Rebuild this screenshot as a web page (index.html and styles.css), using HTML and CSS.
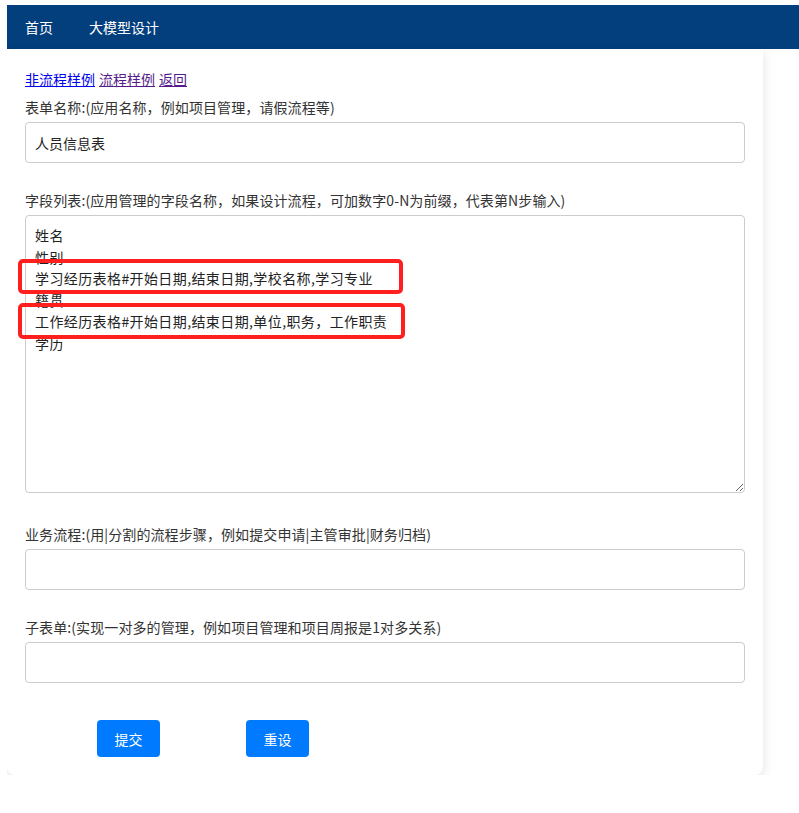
FILE: index.html
```html
<!DOCTYPE html>
<html lang="zh-CN">
<head>
<meta charset="utf-8">
<title>大模型设计</title>
<link rel="stylesheet" href="styles.css">
</head>
<body>
<nav class="navbar">
  <a class="nav-item" href="#">首页</a>
  <a class="nav-item" href="#">大模型设计</a>
</nav>
<main class="card">
  <div class="links">
    <a class="link" href="#">非流程样例</a>
    <a class="link visited" href="#">流程样例</a>
    <a class="link visited" href="#">返回</a>
  </div>
  <div class="group">
    <label class="label">表单名称:(应用名称，例如项目管理，请假流程等)</label>
    <input class="control" type="text" value="人员信息表">
  </div>
  <div class="group group-fields">
    <label class="label">字段列表:(应用管理的字段名称，如果设计流程，可加数字0-N为前缀，代表第N步输入)</label>
    <div class="area-wrap">
      <textarea class="control area">姓名
性别
学习经历表格#开始日期,结束日期,学校名称,学习专业
籍贯
工作经历表格#开始日期,结束日期,单位,职务，工作职责
学历</textarea>
      <div class="mark mark-1"></div>
      <div class="mark mark-2"></div>
    </div>
  </div>
  <div class="group group-flow">
    <label class="label">业务流程:(用|分割的流程步骤，例如提交申请|主管审批|财务归档)</label>
    <input class="control" type="text">
  </div>
  <div class="group group-sub">
    <label class="label">子表单:(实现一对多的管理，例如项目管理和项目周报是1对多关系)</label>
    <input class="control" type="text">
  </div>
  <div class="actions">
    <button class="btn" type="button">提交</button>
    <button class="btn" type="button">重设</button>
  </div>
</main>
</body>
</html>
```

FILE: styles.css
```css
html, body {
  background: #ffffff;
}
body {
  margin: 5px 0 0 7px;
  font-family: "Noto Sans CJK SC", "Noto Sans", sans-serif;
  font-size: 14px;
  line-height: 21px;
  color: #333333;
}
.navbar {
  display: flex;
  align-items: center;
  height: 44px;
  background: #033f7c;
}
.nav-item {
  padding: 0 18px;
  color: #ffffff;
  text-decoration: none;
  font-size: 14px;
}
.card {
  width: 756px;
  box-sizing: border-box;
  padding: 20px 18px 18px;
  background: #ffffff;
  border-radius: 0 0 8px 8px;
  box-shadow: 0 3px 12px rgba(0, 0, 0, 0.12);
}
.links {
  display: flex;
  gap: 4px;
  margin-bottom: 7px;
}
.link {
  color: #0000ee;
  text-decoration: underline;
}
.link.visited {
  color: #551a8b;
}
.group {
  display: flex;
  flex-direction: column;
}
.label {
  display: block;
  margin-bottom: 4px;
  color: #333333;
  letter-spacing: 0.1px;
}
.group-fields { margin-top: 27px; }
.group-flow { margin-top: 31px; }
.group-sub { margin-top: 27px; }
.control {
  display: block;
  width: 100%;
  height: 41px;
  box-sizing: border-box;
  margin: 0;
  padding: 0 9px;
  border: 1px solid #cccccc;
  border-radius: 4px;
  font-family: "Noto Sans CJK SC", "Noto Sans", sans-serif;
  font-size: 14px;
  color: #222222;
  background: #ffffff;
}
.area-wrap {
  position: relative;
}
.area {
  height: 278px;
  padding: 9px 9px;
  line-height: 21.6px;
  letter-spacing: 0.4px;
  resize: vertical;
}
.mark {
  position: absolute;
  box-sizing: border-box;
  border: 4px solid #ff1f1f;
  border-radius: 5px;
  pointer-events: none;
}
.mark-1 {
  left: -7px;
  top: 44px;
  width: 385px;
  height: 35px;
}
.mark-2 {
  left: -7px;
  top: 88px;
  width: 387px;
  height: 36px;
}
.actions {
  display: flex;
  gap: 86px;
  margin: 37px 0 0 72px;
}
.btn {
  width: 63px;
  height: 37px;
  padding: 0;
  border: none;
  border-radius: 4px;
  background: #007bff;
  color: #ffffff;
  font-family: "Noto Sans CJK SC", "Noto Sans", sans-serif;
  font-size: 14px;
}
```
